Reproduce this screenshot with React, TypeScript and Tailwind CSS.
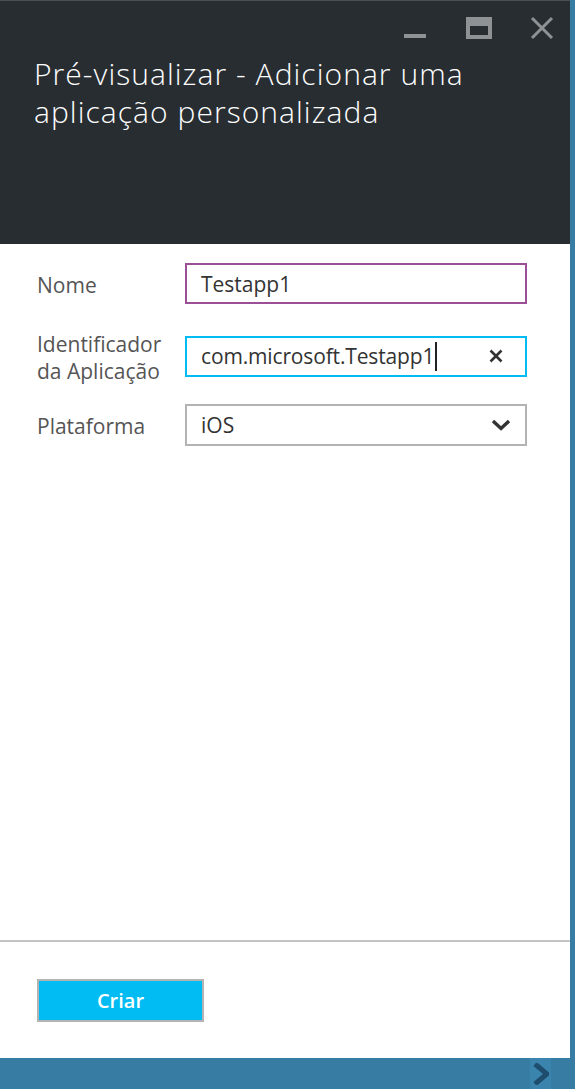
const font = { fontFamily: '"Open Sans", "Noto Sans", sans-serif' };

function WindowButtons() {
  return (
    <svg width="160" height="50" viewBox="0 0 160 50" className="text-[#8e9295]">
      {/* minimize */}
      <rect x="4" y="33" width="22" height="4" fill="currentColor" />
      {/* maximize */}
      <path d="M66 16h26v22h-26z M70 25v9h18v-9z" fill="currentColor" fillRule="evenodd" />
      {/* close */}
      <path d="M132 17l20 20M152 17l-20 20" stroke="currentColor" strokeWidth="3" />
    </svg>
  );
}

export default function App() {
  return (
    <div className="w-[575px] h-[1089px] flex flex-col bg-[#367ca3] overflow-hidden" style={font}>
      <div className="flex h-[1058px]">
        <div className="w-[570px] flex flex-col bg-white">
          {/* Header */}
          <div className="h-[244px] bg-[#282d32] border-t border-[#4a4f54] flex flex-col">
            <div className="flex justify-end pr-[10px] h-[54px]">
              <WindowButtons />
            </div>
            <h1 className="pl-[34px] w-[530px] text-[30px] leading-[38px] text-white font-light tracking-[1.05px]">
              Pré-visualizar - Adicionar uma aplicação personalizada
            </h1>
          </div>

          {/* Form */}
          <div className="flex-1 pt-[19px] pl-[37px] pr-[43px] text-[21px] text-[#555]">
            <div className="flex items-center">
              <label className="w-[148px] leading-[27px] pt-[3px]">Nome</label>
              <div className="flex-1 h-[41px] border-2 border-[#9b4f96] flex items-center pl-[14px] pt-[2px] text-[#333]">
                Testapp1
              </div>
            </div>
            <div className="flex items-center mt-[23px]">
              <label className="w-[148px] leading-[27px] pt-[4px]">
                Identificador
                <br />
                da Aplicação
              </label>
              <div className="flex-1 h-[41px] border-2 border-[#00bcf2] flex items-center pl-[14px] pr-[22px] text-[#333]">
                <span className="pt-[2px] tracking-[-0.15px]">com.microsoft.Testapp1</span>
                <span className="w-[2px] h-[29px] bg-[#222] ml-[1px]" />
                <svg width="14" height="14" viewBox="0 0 14 14" className="ml-auto">
                  <path d="M1.5 1.5l11 11M12.5 1.5l-11 11" stroke="#333" strokeWidth="2.6" />
                </svg>
              </div>
            </div>
            <div className="flex items-center mt-[19px]">
              <label className="w-[148px] leading-[27px] pt-[3px]">Plataforma</label>
              <div className="flex-1 h-[42px] border-2 border-[#b3b3b3] flex items-center pl-[14px] pr-[14px] text-[#333]">
                <span className="pt-[2px]">iOS</span>
                <svg width="20" height="12" viewBox="0 0 20 12" className="ml-auto">
                  <path d="M2 2l8 7.5 8-7.5" fill="none" stroke="#333" strokeWidth="3.4" />
                </svg>
              </div>
            </div>
          </div>

          {/* Footer */}
          <div className="h-[2px] bg-[#c4c4c4]" />
          <div className="h-[116px] pt-[37px] pl-[37px]">
            <button className="w-[167px] h-[43px] bg-[#00bcf2] border-2 border-[#b3b3b3] text-white text-[20px] font-semibold pt-[1px]">
              Criar
            </button>
          </div>
        </div>
        <div className="flex-1 bg-[#367ca3]" />
      </div>

      {/* Bottom bar */}
      <div className="flex-1 flex justify-end pr-[24px]">
        <div className="w-[21px] h-full bg-[#3a84ad] flex items-center justify-center">
          <svg width="16" height="22" viewBox="0 0 16 22">
            <path d="M2 1l12 10-12 10" fill="none" stroke="#1e4d6e" strokeWidth="5" />
          </svg>
        </div>
      </div>
    </div>
  );
}
